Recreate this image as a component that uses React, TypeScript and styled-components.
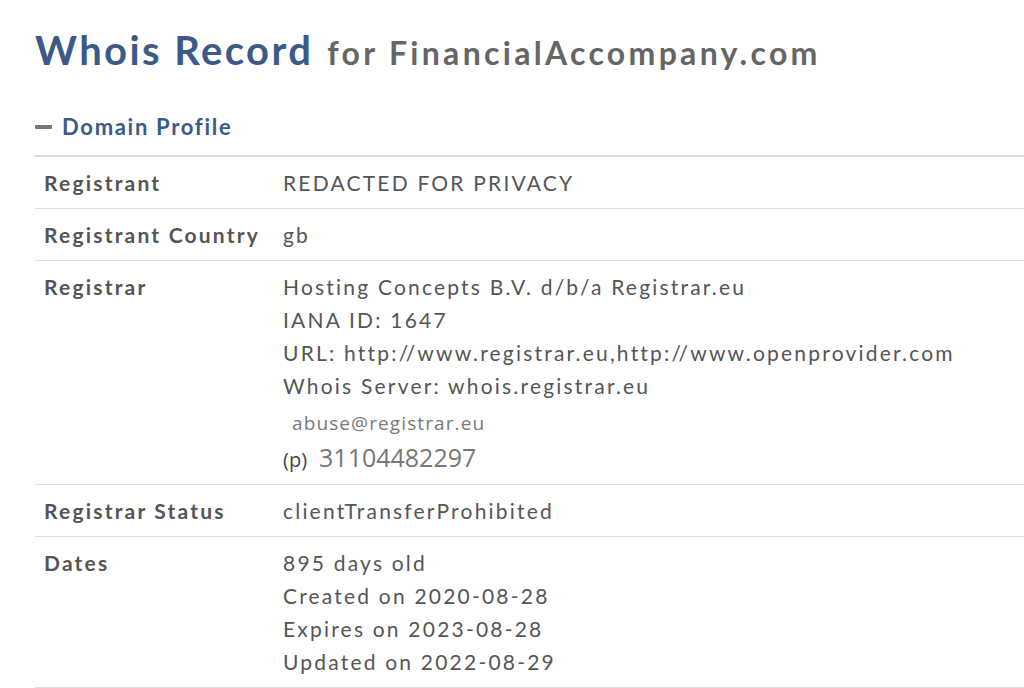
import React from "react";
import styled, { createGlobalStyle } from "styled-components";

const GlobalStyle = createGlobalStyle`
  html, body {
    margin: 0;
    padding: 0;
    background: #ffffff;
    overflow: hidden;
  }
  body {
    font-family: Lato, "Open Sans", sans-serif;
    color: #555555;
  }
`;

type Row = {
  label: string;
  lines: string[];
  contacts?: boolean;
};

const rows: Row[] = [
  { label: "Registrant", lines: ["REDACTED FOR PRIVACY"] },
  { label: "Registrant Country", lines: ["gb"] },
  {
    label: "Registrar",
    lines: [
      "Hosting Concepts B.V. d/b/a Registrar.eu",
      "IANA ID: 1647",
      "URL: http://www.registrar.eu,http://www.openprovider.com",
      "Whois Server: whois.registrar.eu",
    ],
    contacts: true,
  },
  { label: "Registrar Status", lines: ["clientTransferProhibited"] },
  {
    label: "Dates",
    lines: [
      "895 days old",
      "Created on 2020-08-28",
      "Expires on 2023-08-28",
      "Updated on 2022-08-29",
    ],
  },
];

export default function App() {
  return (
    <>
      <GlobalStyle />
      <Page>
        <Title>
          Whois Record <TitleSub>for FinancialAccompany.com</TitleSub>
        </Title>

        <SectionHeader>
          <Minus />
          <SectionTitle>Domain Profile</SectionTitle>
        </SectionHeader>

        <Table>
          {rows.map((row) => (
            <TableRow key={row.label}>
              <Label>{row.label}</Label>
              <Value>
                {row.lines.map((line, i) => (
                  <div key={i}>{line}</div>
                ))}
                {row.contacts && (
                  <>
                    <Email>abuse@registrar.eu</Email>
                    <Phone>
                      (p)<PhoneNumber>31104482297</PhoneNumber>
                    </Phone>
                  </>
                )}
              </Value>
            </TableRow>
          ))}
        </Table>
      </Page>
    </>
  );
}

const Page = styled.div`
  padding: 27px 0 0 35px;
`;

const Title = styled.h1`
  display: flex;
  align-items: baseline;
  gap: 14px;
  height: 46px;
  margin: 0;
  font-family: Lato, sans-serif;
  font-weight: 700;
  font-size: 40px;
  line-height: 46px;
  color: #3b5a87;
  letter-spacing: 2.4px;
  white-space: nowrap;
`;

const TitleSub = styled.span`
  font-size: 32px;
  color: #656565;
  letter-spacing: 3.3px;
`;

const SectionHeader = styled.div`
  display: flex;
  align-items: center;
  gap: 10px;
  margin-top: 40px;
  height: 28px;
  padding-bottom: 14px;
  border-bottom: 2px solid #dadada;
`;

const Minus = styled.span`
  display: block;
  width: 17px;
  height: 4px;
  border-radius: 1px;
  background: #787878;
`;

const SectionTitle = styled.span`
  font-family: Lato, sans-serif;
  font-weight: 700;
  font-size: 22px;
  line-height: 28px;
  color: #3b5a87;
  letter-spacing: 1.7px;
`;

const Table = styled.div`
  display: flex;
  flex-direction: column;
`;

const TableRow = styled.div`
  display: grid;
  grid-template-columns: 248px 1fr;
  padding: 9px 0;
  border-bottom: 1px solid #e0e0e0;
`;

const Label = styled.div`
  padding-left: 9px;
  font-weight: 700;
  font-size: 21px;
  line-height: 33px;
  color: #555555;
  letter-spacing: 2.2px;
  white-space: nowrap;
`;

const Value = styled.div`
  display: flex;
  flex-direction: column;
  font-size: 21px;
  line-height: 33px;
  color: #555555;
  letter-spacing: 2.2px;
  white-space: nowrap;
`;

const Email = styled.div`
  margin-top: 6px;
  padding-left: 9px;
  font-family: "Open Sans", sans-serif;
  font-size: 19px;
  line-height: 30px;
  letter-spacing: 1.1px;
  color: #7a7a7a;
`;

const Phone = styled.div`
  display: flex;
  align-items: baseline;
  height: 34px;
  margin-top: 3px;
  font-family: "Open Sans", sans-serif;
  font-size: 20px;
  line-height: 32px;
  letter-spacing: 0;
  color: #444444;
`;

const PhoneNumber = styled.span`
  margin-left: 12px;
  font-size: 25px;
  color: #777777;
`;
